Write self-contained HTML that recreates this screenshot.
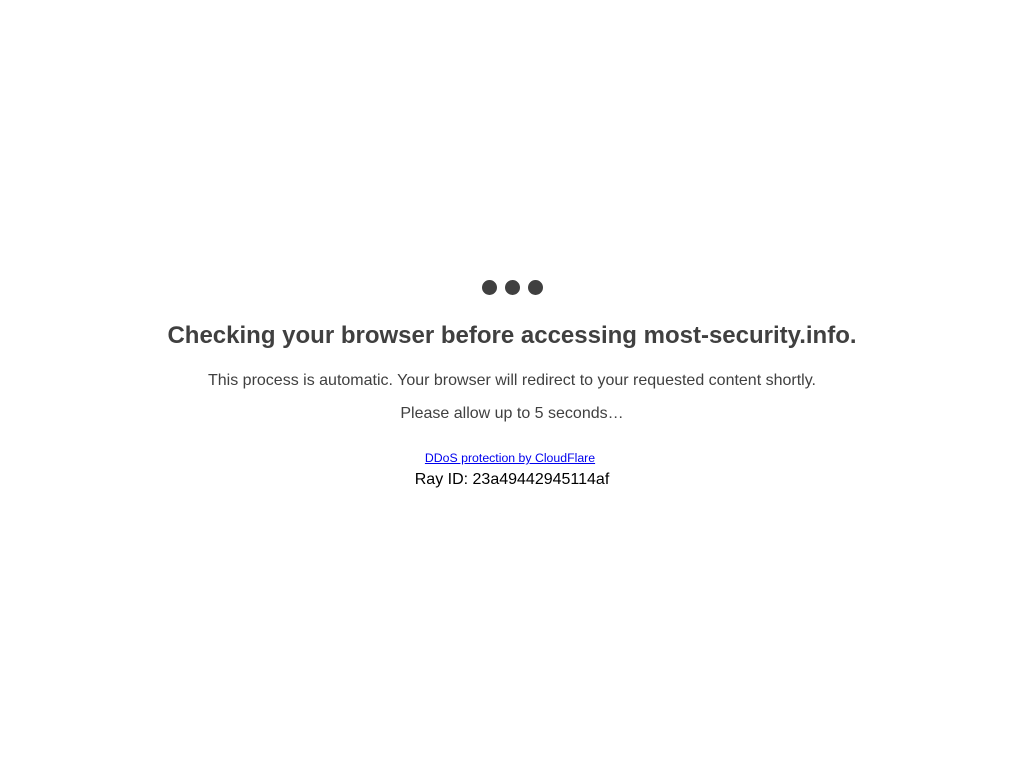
<!DOCTYPE html>
<html><head><meta charset="utf-8"><style>
html,body{margin:0;padding:0;background:#fff;width:1024px;height:768px;overflow:hidden;font-family:"Liberation Sans",Arial,sans-serif}
.c{position:absolute;left:0;width:1024px;text-align:center;white-space:nowrap}
.dot{position:absolute;top:280px;width:15px;height:15px;border-radius:50%;background:#404040}
h1{margin:0;font-size:24px;font-weight:bold;color:#404040;top:321px;line-height:30px}
.p{font-size:16px;color:#404040;line-height:20px}
a{color:#0000ee;text-decoration:underline;font-size:12.3px}
</style></head><body>
<div class="dot" style="left:482px"></div>
<div class="dot" style="left:505px"></div>
<div class="dot" style="left:528px"></div>
<h1 class="c">Checking your browser before accessing most-security.info.</h1>
<div class="c p" style="top:371px">This process is automatic. Your browser will redirect to your requested content shortly.</div>
<div class="c p" style="top:404px">Please allow up to 5 seconds…</div>
<div class="c" style="top:450px;left:-2px;line-height:15px"><a href="#">DDoS protection by CloudFlare</a></div>
<div class="c" style="top:470px;font-size:16px;color:#000;line-height:20px">Ray ID: 23a49442945114af</div>
</body></html>
